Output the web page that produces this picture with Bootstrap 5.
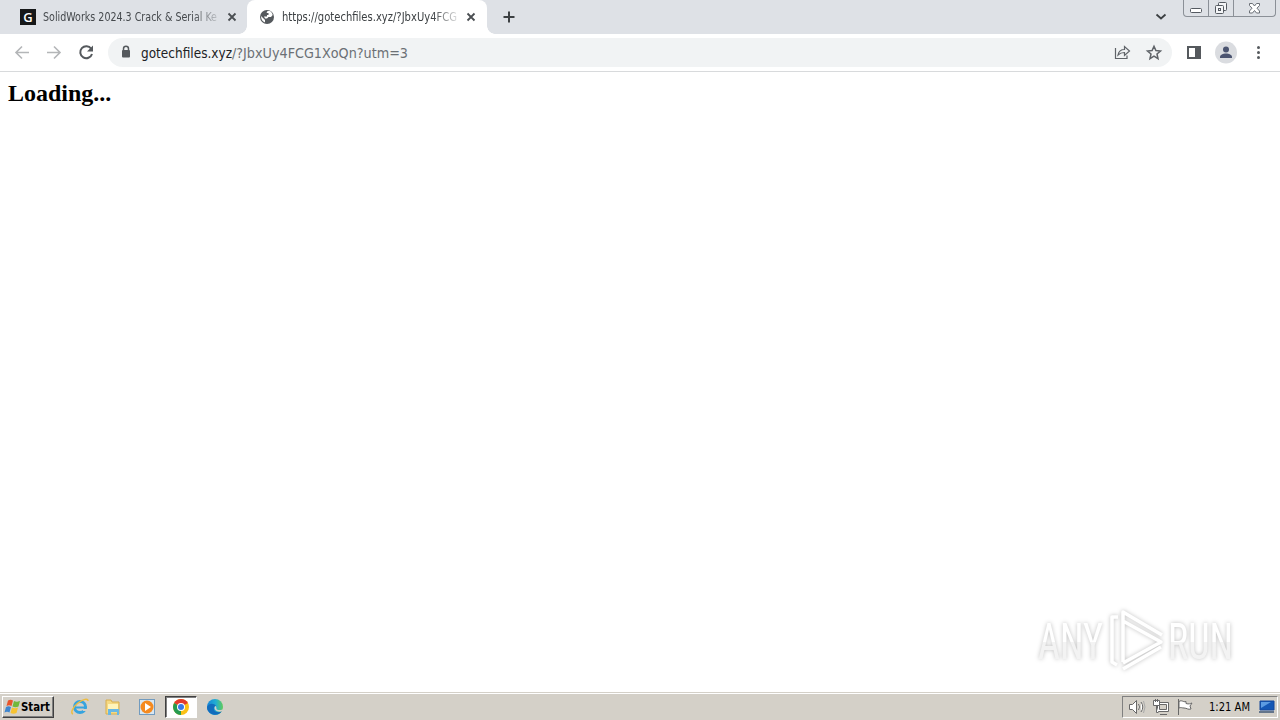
<!DOCTYPE html>
<html lang="en">
<head>
  <meta charset="UTF-8">
  <title>Loading</title>
  <link href="https://cdn.jsdelivr.net/npm/bootstrap@5.3.0/dist/css/bootstrap.min.css" rel="stylesheet">
  <style>
    body {
      width: 1280px;
      height: 720px;
      overflow: hidden;
      background: #fff;
      font-family: "DejaVu Sans Condensed", "DejaVu Sans", sans-serif;
      font-stretch: condensed;
      line-height: 1;
    }
    svg { display: block; flex: none; }

    /* tab strip */
    .tab-strip { height: 34px; background: #dee1e6; }
    .browser-tab { height: 34px; font-size: 11.5px; color: #45494d; }
    .tab-one { width: 247px; padding: 0 9px 0 20px; border-bottom-right-radius: 8px; }
    .tab-two {
      width: 240px; padding: 0 10px 0 12px; background: #fff; color: #3c4043;
      border-radius: 8px 8px 0 0; position: relative;
    }
    .tab-two::before, .tab-two::after {
      content: ""; position: absolute; bottom: 0; width: 8px; height: 8px;
    }
    .tab-two::before { left: -8px; background: radial-gradient(circle at 0 0, transparent 7.5px, #fff 8px); }
    .tab-two::after { right: -8px; background: radial-gradient(circle at 100% 0, transparent 7.5px, #fff 8px); }
    .tab-title {
      width: 175px; margin-left: 7px; white-space: nowrap; line-height: 16px;
      -webkit-mask-image: linear-gradient(to right, #000 150px, transparent 180px);
    }
    .favicon {
      width: 16px; height: 16px; background: #161819; color: #fff; font: 600 13px/16px "Open Sans", sans-serif;
      text-align: center;
    }
    .win-buttons {
      width: 93px; height: 17px; border: 1px solid #8b9097; border-top: 0; border-radius: 0 0 4px 4px;
      margin-right: 4px;
    }
    .win-buttons > div + div { border-left: 1px solid #8b9097; }

    /* toolbar */
    .tool-bar { height: 38px; border-bottom: 1px solid #d8dadc; }
    .address-bar { width: 1064px; height: 29px; margin-left: 6px; background: #f1f3f4; border-radius: 15px; }
    .url { font-size: 14px; line-height: 20px; white-space: nowrap; }

    .page-view { height: 620px; }
    .page-view h1 { font: bold 24px/28px "Liberation Serif", serif; color: #000; margin: 0; padding: 7px 0 0 8px; }
    .watermark { position: absolute; left: 1026px; top: 600px; filter: drop-shadow(0 0 2px rgba(0, 0, 0, .25)); }

    /* taskbar */
    .task-bar { height: 28px; background: #d4d0c8; border-top: 1px solid #d4d0c8; box-shadow: inset 0 1px #fff; padding: 2px 2px 2px; }
    .start-btn {
      width: 52px; height: 22px; border: 1px solid; border-color: #fff #404040 #404040 #fff;
      box-shadow: inset -1px -1px #808080; padding-left: 1px;
      font: bold 12px/20px "DejaVu Sans Condensed", "DejaVu Sans", sans-serif; color: #000;
    }
    .active-app { width: 32px; height: 22px; background: #fff; border: 1px solid; border-color: #404040 #fff #fff #404040; box-shadow: inset 1px 1px #808080; }
    .tray { width: 156px; height: 22px; border: 1px solid; border-color: #808080 #fff #fff #808080; font-size: 11.5px; color: #000; }
  </style>
</head>
<body>
  <!-- Tabs -->
  <div class="tab-strip d-flex">
    <div class="browser-tab tab-one d-flex align-items-center">
      <div class="favicon">G</div>
      <div class="tab-title"><svg width="175" height="16"><text x="0" y="12" textLength="174" lengthAdjust="spacingAndGlyphs" fill="#45494d">SolidWorks 2024.3 Crack &amp; Serial Ke</text></svg></div>
      <svg class="ms-auto" width="12" height="12" stroke="#4a4e52" stroke-width="1.8"><path d="M2.500 2.500l7 7M9.500 2.500l-7 7"/></svg>
    </div>
    <div class="browser-tab tab-two d-flex align-items-center">
      <svg width="16" height="16" viewBox="0 0 16 16"><circle cx="8" cy="8" r="7" fill="#55595d"/><path d="M2 7l4 4v2.500C3.500 12.500 2 10.500 2 7zM8.500 2h2.500c1.500 1 2.300 2.200 2.700 4L12 8H9.500L8 9.500H6L5 7.500h3V6h1.500V4H7.500z" fill="#fff"/></svg>
      <div class="tab-title"><svg width="176" height="16"><text x="0" y="12" textLength="175" lengthAdjust="spacingAndGlyphs" fill="#3c4043">https://gotechfiles.xyz/?JbxUy4FCG</text></svg></div>
      <svg class="ms-auto" width="12" height="12" stroke="#4a4e52" stroke-width="1.8"><path d="M2.500 2.500l7 7M9.500 2.500l-7 7"/></svg>
    </div>
    <svg class="mt-2" width="44" height="18" stroke="#3c4043" stroke-width="2"><path d="M16.500 9h11M22 3.500v11"/></svg>
    <svg class="ms-auto" width="28" height="34" fill="none" stroke="#3c4043" stroke-width="1.8"><path d="M1.500 14.500l4.500 4 4.500-4"/></svg>
    <div class="win-buttons d-flex">
      <div><svg width="24" height="16" fill="#fff" stroke="#555a61"><rect x="6.500" y="8.500" width="11" height="4" rx="1"/></svg></div>
      <div><svg width="24" height="16" fill="#f4f5f7" stroke="#555a61"><rect x="9.500" y="2.500" width="8" height="8" rx="1"/><rect x="6.500" y="5.500" width="8" height="8" rx="1"/><rect x="9.500" y="8.500" width="2" height="2"/></svg></div>
      <div><svg width="40" height="16" fill="#fff" stroke="#6a6f76"><path d="M15.500 3.500h3l2 2.500 2-2.500h3v2l-2.500 2.700 2.500 2.800v2h-3l-2-2.500-2 2.500h-3v-2l2.500-2.800-2.500-2.700z"/></svg></div>
    </div>
  </div>

  <!-- Toolbar -->
  <div class="tool-bar d-flex align-items-center">
    <svg width="102" height="36" fill="none" stroke="#b4b6b8" stroke-width="1.6">
      <path d="M29 17.500H16M22 11.500l-6 6 6 6M47 17.500h13M54 11.500l6 6-6 6"/>
      <path d="M91.200 13.800A6 6 0 1 0 92 19" stroke="#55595d" stroke-width="2"/>
      <path d="M93 10.500v6h-6z" fill="#55595d" stroke="none"/>
    </svg>
    <div class="address-bar d-flex align-items-center">
      <svg width="33" height="28"><path d="M15.500 11.500V9.800a2.500 2.500 0 0 1 5 0v1.700" fill="none" stroke="#55595d" stroke-width="1.500"/><rect x="14" y="11" width="8" height="7.500" rx="1" fill="#55595d"/></svg>
      <svg class="url" width="272" height="22">
        <text x="0" y="16" textLength="91" lengthAdjust="spacingAndGlyphs" fill="#202124">gotechfiles.xyz</text>
        <text x="91" y="16" textLength="176" lengthAdjust="spacingAndGlyphs" fill="#6b7075">/?JbxUy4FCG1XoQn?utm=3</text>
      </svg>
      <svg class="ms-auto" width="66" height="28" fill="none" stroke="#5f6368" stroke-width="1.200">
        <path d="M9.500 9v10.500h11.500v-3"/>
        <path d="M12 16c.8-4 3.500-5.500 6.500-5.500V7.500l5 4.500-5 4.500v-3c-2.500 0-4.500.5-6.500 2.500z"/>
        <path d="M48 7.300l1.900 4.200 4.600.5-3.500 3 1 4.600-4-2.400-4 2.400 1-4.600-3.500-3 4.600-.5z" stroke-width="1.500"/>
      </svg>
    </div>
    <svg width="108" height="36">
      <path d="M16 12h11v11H16z" fill="#fff" stroke="#55595d" stroke-width="2"/><path d="M23 11h6v13h-6z" fill="#55595d"/>
      <circle cx="54" cy="17.500" r="11" fill="#dadce0"/><circle cx="54" cy="14.500" r="3" fill="#4b5470"/><path d="M48 23v-1c0-2.300 3-3.500 6-3.500s6 1.200 6 3.500v1z" fill="#4b5470"/>
      <g fill="#55595d"><circle cx="86.500" cy="12.500" r="1.500"/><circle cx="86.500" cy="17.500" r="1.500"/><circle cx="86.500" cy="22.500" r="1.500"/></g>
    </svg>
  </div>

  <!-- Page -->
  <div class="page-view">
    <h1>Loading...</h1>
  </div>

  <svg class="watermark" width="240" height="80">
    <defs><linearGradient id="fade" gradientUnits="userSpaceOnUse" x1="0" y1="0" x2="0" y2="80"><stop offset=".52" stop-color="#fff"/><stop offset=".53" stop-color="#f3f3f3"/></linearGradient></defs>
    <g fill="url(#fade)" font-family="Roboto, sans-serif" font-size="50">
      <text x="12" y="59" textLength="65" lengthAdjust="spacingAndGlyphs">ANY</text>
      <text x="142" y="59" textLength="65" lengthAdjust="spacingAndGlyphs">RUN</text>
    </g>
    <g fill="none" stroke="#fff" stroke-width="3.500" stroke-linejoin="round">
      <path d="M97 62V12l39 23M97 21l38 21-38 21M92 17h-6v45l5 3M97 69l38-22"/>
    </g>
  </svg>

  <!-- Taskbar -->
  <div class="task-bar d-flex align-items-center">
    <div class="start-btn d-flex align-items-center">
      <svg width="17" height="18" viewBox="0 0 17 18">
        <path d="M4 2.500c2-1 3-1 5 0L7.500 8c-2-1-3-1-5 0z" fill="#e9552b"/><path d="M10 3c2 1 3 1 6 0L14.500 8.500c-2 1-4 1-6 0z" fill="#72b83b"/>
        <path d="M2 9c2-1 3-1 5 0l-1.500 5.500c-2-1-3-1-5 0z" fill="#3f86cf"/><path d="M8 9.500c2 1 4 1 6 0L12.500 15c-2 1-4 1-6 0z" fill="#f7c331"/>
      </svg>
      <svg width="31" height="18"><text x="0" y="13" textLength="29" lengthAdjust="spacingAndGlyphs">Start</text></svg>
    </div>
    <svg width="111" height="20">
      <!-- Internet Explorer -->
      <circle cx="26" cy="10" r="5.500" fill="none" stroke="#36a4df" stroke-width="3"/><path d="M22 9.500h11v2H22z" fill="#36a4df"/><path d="M29 12h5v2h-5z" fill="#d4d0c8"/>
      <path d="M19 17c-3-1 0-7 5-11s10-5 10-2" fill="none" stroke="#edbd42" stroke-width="1.500"/>
      <!-- Explorer -->
      <path d="M52 3h5l1 2h7v12H52z" fill="#f5d983" stroke="#d8ae4e"/><path d="M54 7h10v5H54z" fill="#fff4bb"/><path d="M54 17v-5h11v6h-2v-3h-6v3h-3z" fill="#69b8e4"/>
      <!-- Media player -->
      <rect x="85.500" y="2.500" width="15" height="15" fill="#d8e7f2" stroke="#719bbf"/><circle cx="93" cy="10" r="6.500" fill="#f58a1f"/><path d="M91 6l6 4-6 4z" fill="#fff"/>
    </svg>
    <div class="active-app d-flex justify-content-center align-items-center">
      <svg width="16" height="16" viewBox="0 0 16 16"><circle cx="8" cy="8" r="8" fill="#fbc116"/><path d="M8 8L1.100 4a8 8 0 0 1 13.800 0z" fill="#e33b2e"/><path d="M8 8v8A8 8 0 0 1 1.100 4z" fill="#269b50"/><circle cx="8" cy="8" r="4" fill="#fff"/><circle cx="8" cy="8" r="3" fill="#3979e8"/></svg>
    </div>
    <svg width="34" height="20" viewBox="0 0 34 20">
      <defs><linearGradient id="edge"><stop offset="0" stop-color="#1686d9"/><stop offset=".55" stop-color="#22add2"/><stop offset="1" stop-color="#62cc59"/></linearGradient></defs>
      <circle cx="18" cy="10" r="8" fill="url(#edge)"/><path d="M10 10c2-4 7-4 9-1-3 1-3 5 1 6 2 .5 4-.5 5-1-2 4-8 5-12 2-2-1.500-3-3-3-6z" fill="#126cbd"/><path d="M18 9c2 0 1 3 2 3.500 2 1 5 .5 6.500-.5l-.5 2c-5 2-10-1-8-5z" fill="#d4d0c8"/>
    </svg>
    <div class="tray d-flex align-items-center ms-auto">
      <svg width="85" height="20" fill="#fff" stroke="#686868">
        <path d="M6.500 7.500h3l4-4v13l-4-4h-3zM15.500 7q2 3 0 6M18 5q3.500 5 0 10"/><path d="M20.500 4q3 6 0 12" fill="none" stroke="#aaa"/>
        <path d="M34.500 5.500h11v9h-11zM37 17.500h7"/><path d="M36.500 7.500h7v5h-7z" fill="#d4d0c8"/><path d="M30.500 3.500h6v5h-6zM32.500 2v3M34.500 2v3M33.500 9v6.500h2"/>
        <path d="M55.500 2v16M56 4.500c3-2 4 1 7 0v2c3 1 4 0 6-.5l-2 3 1 3c-3 1-4-1-7-1-2 0-3-1-5 0z"/>
      </svg>
      <svg width="43" height="18"><text x="1" y="13" textLength="41" lengthAdjust="spacingAndGlyphs">1:21 AM</text></svg>
      <svg class="ms-auto" width="19" height="18"><path d="M2 3h14v9H2z" fill="#1557b5" stroke="#17499a"/><path d="M3 4h10L3 10z" fill="#5c9be2"/><path d="M1 14h15" stroke="#64758b" stroke-width="2"/></svg>
    </div>
  </div>

  <script src="https://cdn.jsdelivr.net/npm/bootstrap@5.3.0/dist/js/bootstrap.bundle.min.js"></script>
</body>
</html>
